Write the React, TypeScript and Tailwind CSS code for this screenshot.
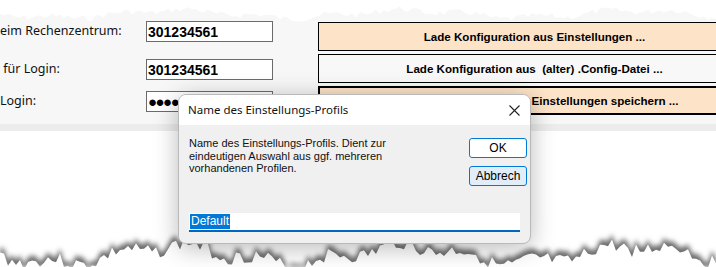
import React from "react";

const ui = { fontFamily: "'Noto Sans', 'Open Sans', sans-serif" };
const ms = { fontFamily: "'Liberation Sans', Arial, sans-serif" };

// jagged edge points for the torn paper effect
function tornPath(base: number, amp: number, seed: number, down: boolean, h: number) {
  let s = seed;
  const rnd = () => {
    s = (s * 9301 + 49297) % 233280;
    return s / 233280;
  };
  let d = `M0 ${down ? h : 0}`;
  for (let x = 0; x <= 716; x += 4) {
    const y = base + Math.sin(x / 37) * amp * 0.6 + Math.sin(x / 11) * amp * 0.3 + (rnd() - 0.5) * amp;
    d += ` L${x} ${y.toFixed(1)}`;
  }
  d += ` L716 ${down ? h : 0} Z`;
  return d;
}

function FieldRow({ label, value, top }: { label: string; value: React.ReactNode; top: string }) {
  return (
    <div className={`flex items-center ${top}`}>
      <span className="w-[146px] text-[12.5px] text-[#111] whitespace-pre" style={ui}>
        {label}
      </span>
      <div className="w-[127px] h-[21px] border border-[#6b6b6b] bg-white flex items-center pl-[1px] overflow-hidden">
        {value}
      </div>
    </div>
  );
}

function ActionButton({ text, bg, thick }: { text: string; bg: string; thick?: boolean }) {
  return (
    <div
      className={`h-[29px] flex items-center justify-center text-[11.6px] font-bold text-black whitespace-pre ${bg} ${
        thick ? "border-2 border-black" : "border border-black"
      }`}
      style={ms}
    >
      {text}
    </div>
  );
}

export default function App() {
  return (
    <div className="relative w-[716px] h-[267px] overflow-hidden bg-white">
      {/* Hauptformular */}
      <div className="h-[124px] bg-[#f7f7f7] flex">
        <div className="flex flex-col pt-[21px] shrink-0">
          <FieldRow
            label="eim Rechenzentrum:"
            top=""
            value={<span className="text-[14px] font-bold leading-none" style={ms}>301234561</span>}
          />
          <FieldRow
            label=" für Login:"
            top="mt-[17px]"
            value={<span className="text-[14px] font-bold leading-none" style={ms}>301234561</span>}
          />
          <FieldRow
            label="Login:"
            top="mt-[11px]"
            value={<span className="text-[15px] leading-none tracking-[-1.5px]" style={ms}>●●●●●</span>}
          />
        </div>
        <div className="ml-[45px] w-[433px] shrink-0 flex flex-col gap-[3px] pt-[22px]">
          <ActionButton text="Lade Konfiguration aus Einstellungen ..." bg="bg-[#fde3c8]" />
          <ActionButton text="Lade Konfiguration aus  (alter) .Config-Datei ..." bg="bg-[#f8f8f8]" />
          <ActionButton text="Aktuelle Konfiguration in Einstellungen speichern ..." bg="bg-[#fde3c8]" thick />
        </div>
      </div>
      <div className="h-[7px] bg-[#ececec]" />

      {/* obere Reißkante */}
      <svg className="absolute left-0 top-0" width="716" height="24">
        <path d={tornPath(14, 6, 7, false, 24)} fill="#ffffff" />
      </svg>

      {/* untere Reißkante */}
      <svg className="absolute left-0 top-[200px]" width="716" height="67">
        <defs>
          <filter id="blur" x="-5%" y="-50%" width="110%" height="200%">
            <feGaussianBlur stdDeviation="2.5" />
          </filter>
        </defs>
        <path d={tornPath(50, 14, 3, true, 67)} fill="#6e6e6e" filter="url(#blur)" />
        <path d={tornPath(46, 14, 3, true, 67)} fill="#ffffff" transform="translate(0 9)" />
      </svg>

      {/* Dialog */}
      <div className="absolute left-[178px] top-[94px] w-[353px] h-[150px] rounded-[8px] border border-[#b9b9b9] bg-[#f0f0f0] shadow-[0_4px_24px_rgba(0,0,0,0.28)] overflow-hidden flex flex-col">
        <div className="h-[30px] bg-white flex items-center justify-between pl-[9px] pr-[10px]" style={ui}>
          <span className="text-[11.5px] text-[#111]">Name des Einstellungs-Profils</span>
          <svg width="11" height="11" viewBox="0 0 11 11">
            <path d="M0.5 0.5 L10.5 10.5 M10.5 0.5 L0.5 10.5" stroke="#222" strokeWidth="1.1" />
          </svg>
        </div>
        <div className="flex-1 flex flex-col px-[10px]">
          <div className="flex justify-between pt-[12px]">
            <p className="text-[11px] leading-[12.5px] text-[#111] w-[212px]" style={ms}>
              Name des Einstellungs-Profils. Dient zur eindeutigen Auswahl aus ggf. mehreren vorhandenen Profilen.
            </p>
            <div className="flex flex-col gap-[8px] pt-[1px] mr-[-7px]">
              <div className="w-[58px] h-[20px] rounded-[3px] border border-[#0078d4] bg-white flex items-center justify-center text-[12px] text-black" style={ms}>
                OK
              </div>
              <div className="w-[58px] h-[20px] rounded-[3px] border border-[#0078d4] bg-[#e1eefa] flex items-center justify-center text-[12px] text-black" style={ms}>
                Abbrech
              </div>
            </div>
          </div>
          <div className="mt-auto mb-[11px] h-[19px] bg-white border-b-2 border-[#0067c0] flex items-center">
            <span className="bg-[#0078d7] text-white text-[12px] leading-[15px] px-[1px] ml-[1px]" style={ms}>
              Default
            </span>
          </div>
        </div>
      </div>
    </div>
  );
}
